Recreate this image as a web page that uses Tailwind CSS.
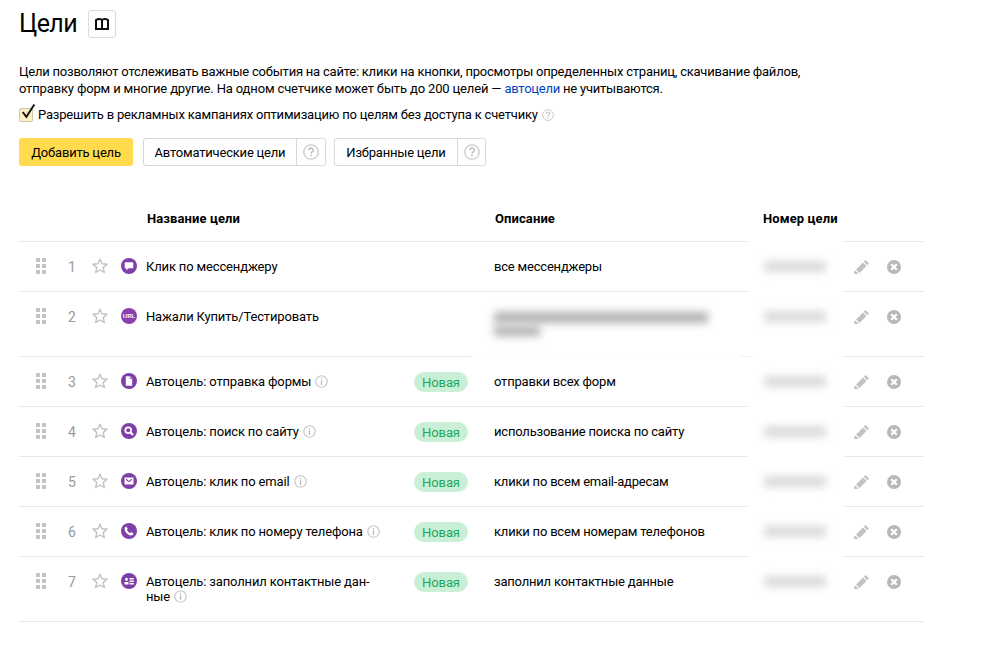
<!DOCTYPE html>
<html lang="ru">
<head>
    <meta charset="UTF-8">
    <title>Цели</title>
    <script src="https://cdn.jsdelivr.net/npm/@tailwindcss/browser@4"></script>
</head>
<body class="bg-white text-black font-['Roboto',sans-serif] text-[13px] leading-[17px] w-[992px] h-[656px] overflow-hidden">
<svg class="hidden">
    <symbol id="grip" viewBox="0 0 10 16"><path fill="#c4c4c4" d="M0 0h4v4H0zM6 0h4v4H6zM0 6h4v4H0zM6 6h4v4H6zM0 12h4v4H0zM6 12h4v4H6z"/></symbol>
    <symbol id="star" viewBox="0 0 16 16"><path fill="none" stroke="#c2c2c2" stroke-width="1.4" stroke-linejoin="round" d="M8 1.200l2 4.600 5 .5-3.800 3.300 1.100 4.900L8 12l-4.300 2.500 1.100-4.900L1 6.300l5-.5z"/></symbol>
    <symbol id="info" viewBox="0 0 13 13"><circle cx="6.500" cy="6.500" r="5.700" fill="none" stroke="#c4c4c4" stroke-width="1.100"/><path fill="#b5b5b5" d="M5.900 3h1.200v1.300H5.900zM5.900 5.300h1.200V10H5.900z"/></symbol>
    <symbol id="pencil" viewBox="0 0 16 16"><path fill="#c2c2c2" d="M11.500 1l3.500 3.500-1.700 1.700-3.500-3.500zM9 3.500L12.500 7l-7 7L2 10.500zM1.300 11.500l3.200 3.200-1.200.3H.2L.2 12.600z"/></symbol>
    <symbol id="cross" viewBox="0 0 14 14"><circle cx="7" cy="7" r="7" fill="#b8b8b8"/><path stroke="#fff" stroke-width="2.200" d="M4.200 4.200l5.600 5.600M9.800 4.200l-5.600 5.600"/></symbol>
    <symbol id="q-mark" viewBox="0 0 16 16"><circle cx="8" cy="8" r="7.200" fill="none" stroke="#c8c8c8" stroke-width="1.300"/><path fill="none" stroke="#bdbdbd" stroke-width="1.400" d="M5.700 6.300c0-3 4.600-3 4.600-.2 0 1.700-2.300 1.800-2.300 3.700"/><path fill="#bdbdbd" d="M7.200 10.700h1.600v1.600H7.200z"/></symbol>
    <symbol id="g-chat" viewBox="0 0 16 16"><circle cx="8" cy="8" r="8" fill="#7e3fa6"/><path fill="#fff" d="M4.500 4.200h7a.8.8 0 0 1 .8.8v4.500a.8.8 0 0 1-.8.8H7.800l-2.600 2v-2h-.7a.8.8 0 0 1-.8-.8V5a.8.8 0 0 1 .8-.8z"/></symbol>
    <symbol id="g-form" viewBox="0 0 16 16"><circle cx="8" cy="8" r="8" fill="#7e3fa6"/><path fill="#fff" d="M4.800 3.300h4.400l2 2.200v7.200H4.800z"/><path fill="#7e3fa6" d="M8.700 3.300v2.600h2.500v-.6H9.300V3.300z"/></symbol>
    <symbol id="g-search" viewBox="0 0 16 16"><circle cx="8" cy="8" r="8" fill="#7e3fa6"/><circle cx="7.200" cy="7.200" r="2.900" fill="none" stroke="#fff" stroke-width="1.700"/><path stroke="#fff" stroke-width="2" d="M9.300 9.300l2.700 2.700"/></symbol>
    <symbol id="g-mail" viewBox="0 0 16 16"><circle cx="8" cy="8" r="8" fill="#7e3fa6"/><path fill="#fff" d="M3.500 4.500h9v7h-9z"/><path fill="none" stroke="#7e3fa6" stroke-width="1.100" d="M5 6.300l3 2.300 3-2.300"/></symbol>
    <symbol id="g-phone" viewBox="0 0 16 16"><circle cx="8" cy="8" r="8" fill="#7e3fa6"/><path fill="#fff" d="M5.200 3.400l1.600 2.300-.9 1.100c.5 1.300 1.600 2.500 3.200 3.300l1.100-1 2.300 1.500c-.3 1.300-1.200 2-2.300 1.900C6.500 12.100 3.800 9.200 3.600 5.800c0-1.100.6-2 1.600-2.400z"/></symbol>
    <symbol id="g-card" viewBox="0 0 16 16"><circle cx="8" cy="8" r="8" fill="#7e3fa6"/><circle cx="5.500" cy="6.300" r="1.500" fill="#fff"/><path fill="#fff" d="M3.500 9h4v2.500h-4zM8.500 5h4.300v1.400H8.500zM8.500 7.500h4.300v1.400H8.500zM8.500 10h4.300v1.400H8.500z"/></symbol>
</svg>

<div class="pl-[19px] w-[924px]">
    <!-- Title -->
    <div class="flex items-center h-[28px] mt-[10px]">
        <h1 class="text-[25px] leading-[28px] font-normal tracking-[-0.6px]">Цели</h1>
        <button class="ml-[11px] w-[28px] h-[28px] border border-[#dcdcdc] rounded-[3px] flex items-center justify-center">
            <svg width="18" height="14" viewBox="0 0 18 14"><path fill="none" stroke="#111" stroke-width="2" d="M9 3C8 1.500 5 1.500 3 3v9h12V3C13 1.500 10 1.500 9 3zM9 3v9"/></svg>
        </button>
    </div>

    <p class="mt-[25px] tracking-[-0.22px]">Цели позволяют отслеживать важные события на сайте: клики на кнопки, просмотры определенных страниц, скачивание файлов,<br><span class="tracking-[-0.15px]">отправку форм и многие другие. На одном счетчике может быть до 200 целей —</span> <a class="text-[#04b]">автоцели</a> не учитываются.</p>

    <div class="flex items-center mt-[9px] h-[17px] relative">
        <span class="w-[14px] h-[14px] bg-[#fdf0c4] border border-[#cfc6a5] rounded-[2px]"></span>
        <svg class="absolute left-[1px] -top-[3px]" width="17" height="18" viewBox="0 0 16 16"><path fill="none" stroke="#111" stroke-width="1.800" d="M2.500 8l3.500 4.500L13.500 1"/></svg>
        <span class="ml-[5px] tracking-[-0.19px]">Разрешить в рекламных кампаниях оптимизацию по целям без доступа к счетчику</span>
        <svg class="ml-[4px]" width="12" height="12"><use href="#q-mark"/></svg>
    </div>

    <!-- Buttons -->
    <div class="flex mt-[15px] h-[28px]">
        <button class="w-[114px] bg-[#ffdb4d] rounded-[3px] tracking-[-0.2px]">Добавить цель</button>
        <div class="flex ml-[10px] w-[183px] border border-[#d9d9d9] rounded-[3px]">
            <span class="w-[153px] flex items-center justify-center border-r border-[#d9d9d9] tracking-[-0.2px]">Автоматические цели</span>
            <span class="flex-1 flex items-center justify-center"><svg width="16" height="16"><use href="#q-mark"/></svg></span>
        </div>
        <div class="flex ml-[8px] w-[152px] border border-[#d9d9d9] rounded-[3px]">
            <span class="w-[123px] flex items-center justify-center border-r border-[#d9d9d9] tracking-[-0.2px]">Избранные цели</span>
            <span class="flex-1 flex items-center justify-center"><svg width="16" height="16"><use href="#q-mark"/></svg></span>
        </div>
    </div>

    <!-- Table -->
    <div class="mt-[44px]">
        <div class="flex h-[32px] border-b border-[#e6e6e6] font-bold relative tracking-[0.1px]">
            <span class="ml-[128px] w-[348px]">Название цели</span>
            <span class="w-[268px]">Описание</span>
            <span>Номер цели</span>
            <span class="absolute left-[730px] top-[26px] w-[92px] h-[8px] bg-white blur-[1px]"></span>
        </div>
        <div id="rows"></div>
    </div>
</div>

<script>
    const rows = [
        { name: 'Клик по мессенджеру', icon: 'g-chat', desc: 'все мессенджеры', h: 50 },
        { name: 'Нажали Купить/Тестировать', icon: 'url', desc: '', h: 65 },
        { name: 'Автоцель: отправка формы', icon: 'g-form', desc: 'отправки всех форм', h: 50, auto: true },
        { name: 'Автоцель: поиск по сайту', icon: 'g-search', desc: 'использование поиска по сайту', h: 50, auto: true },
        { name: 'Автоцель: клик по email', icon: 'g-mail', desc: 'клики по всем email-адресам', h: 50, auto: true },
        { name: 'Автоцель: клик по номеру телефона', icon: 'g-phone', desc: 'клики по всем номерам телефонов', h: 50, auto: true },
        { name: 'Автоцель: заполнил контактные дан-<br>ные', icon: 'g-card', desc: 'заполнил контактные данные', h: 65, auto: true }
    ];

    const urlIcon = `<svg width="16" height="16" viewBox="0 0 16 16"><circle cx="8" cy="8" r="8" fill="#8a3fb0"/><text x="8" y="10" font-size="6" font-weight="700" text-anchor="middle" fill="#fff" font-family="Liberation Sans">URL</text></svg>`;
    const blurText = `<div class="relative mt-[1px]"><div class="absolute -left-[14px] -top-[26px] w-[94px] h-[62px] bg-white blur-[3px]"></div><div class="relative w-[62px] h-[11px] mt-[3px] ml-[1px] bg-[#dadada] blur-[4px]"></div></div>`;
    const blurDesc = `<div class="relative"><div class="absolute -left-[22px] -top-[16px] w-[270px] h-[66px] bg-white blur-[3px]"></div><div class="relative w-[214px] h-[11px] mt-[3px] bg-[#b0b0b0] blur-[4px]"></div><div class="relative w-[46px] h-[10px] mt-[3px] bg-[#b0b0b0] blur-[4px]"></div></div>`;

    document.getElementById('rows').innerHTML = rows.map((r, i) => `
        <div class="flex items-start border-b border-[#e6e6e6] pt-[16px]" style="height:${r.h}px">
            <svg class="ml-[17px]" width="10" height="16"><use href="#grip"/></svg>
            <span class="w-[10px] ml-[21px] pt-[1px] text-[#9a9a9a] text-[14px] text-center">${i + 1}</span>
            <svg class="ml-[15px]" width="16" height="16"><use href="#star"/></svg>
            <span class="ml-[13px]">${r.icon === 'url' ? urlIcon : `<svg width="16" height="16"><use href="#${r.icon}"/></svg>`}</span>
            <div class="ml-[9px] w-[268px] whitespace-nowrap tracking-[-0.15px] leading-[15px] pt-[1px]">${r.name}${r.auto ? ' <svg class="inline ml-[1px] -mt-[2px]" width="13" height="13"><use href="#info"/></svg>' : ''}</div>
            <div class="w-[80px] shrink-0">${r.auto ? '<span class="block w-[54px] h-[20px] mt-[-1px] rounded-[10px] bg-[#c9f0d6] text-[#1fa75c] text-center leading-[21px] tracking-[-0.1px]">Новая</span>' : ''}</div>
            <div class="w-[269px] shrink-0 leading-[15px] pt-[1px] tracking-[-0.2px]">${r.desc || blurDesc}</div>
            <div class="w-[91px] shrink-0">${blurText}</div>
            <svg class="mt-[1px]" width="16" height="16"><use href="#pencil"/></svg>
            <svg class="ml-[17px] mt-[2px]" width="14" height="14"><use href="#cross"/></svg>
        </div>`).join('');
</script>
</body>
</html>
